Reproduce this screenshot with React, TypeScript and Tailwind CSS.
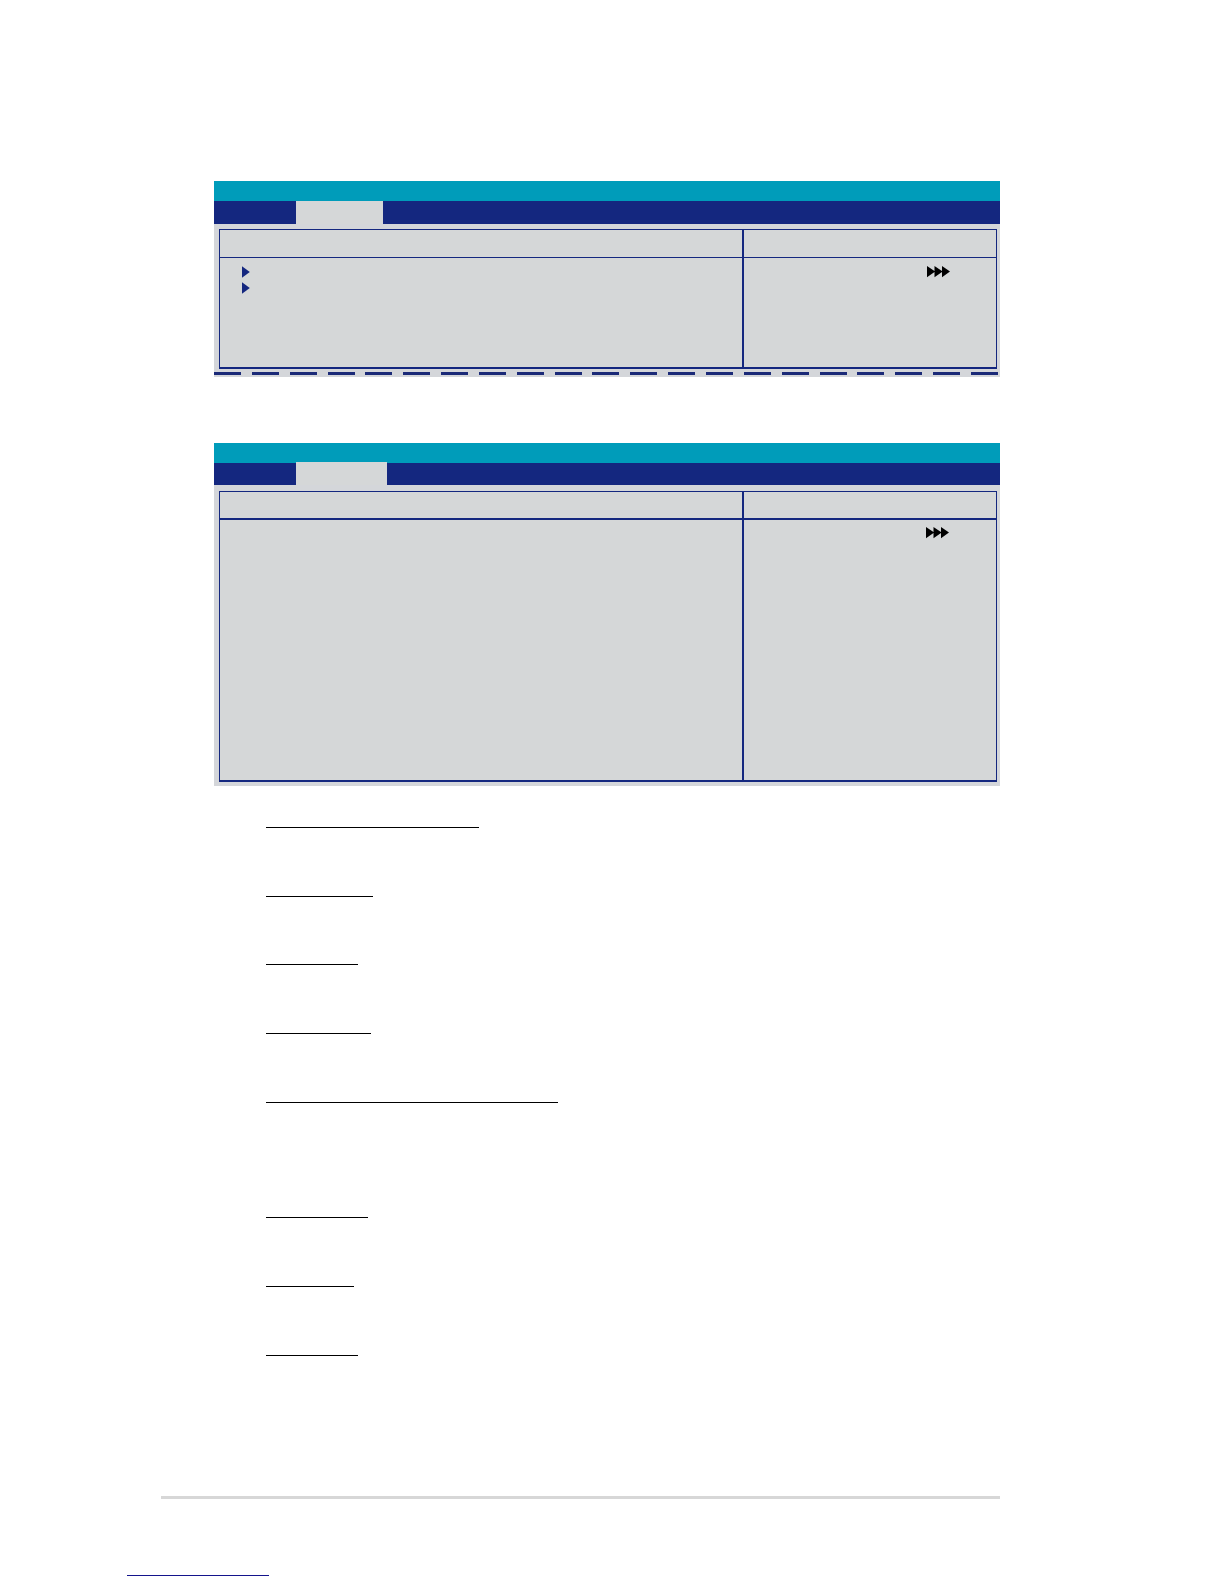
import clsx from "clsx";

const DASHES = Array.from({ length: 21 }, (_, i) => i);

const ITEMS = [
    { id: 1, width: "w-[213px]", height: "h-[69px]" },
    { id: 2, width: "w-[107px]", height: "h-[68px]" },
    { id: 3, width: "w-[92px]", height: "h-[69px]" },
    { id: 4, width: "w-[105px]", height: "h-[69px]" },
    { id: 5, width: "w-[292px]", height: "h-[115px]" },
    { id: 6, width: "w-[102px]", height: "h-[69px]" },
    { id: 7, width: "w-[88px]", height: "h-[69px]" },
    { id: 8, width: "w-[92px]", height: "h-px" },
];

function Arrow() {
    return (
        <svg width="8" height="12" viewBox="0 0 8 12" className="block fill-[#14277f]" aria-hidden="true">
            <path d="M0 0.3L7.8 6L0 11.7Z" />
        </svg>
    );
}

function TripleArrow() {
    return (
        <svg width="23" height="12" viewBox="0 0 23 12" className="block fill-black" aria-hidden="true">
            <path d="M0 0L8.2 5.6L0 11.3ZM7.5 0L15.7 5.6L7.5 11.3ZM15 0L23 5.6L15 11.3Z" />
        </svg>
    );
}

function SetupScreen({ compact = false }: { compact?: boolean }) {
    return (
        <section className="bg-[#d4d6da]">
            <div className="h-5 bg-[#009cba]" />
            <nav className={clsx("flex items-end bg-[#14277f] pl-[82px]", compact ? "h-[23px]" : "h-[22px]")}>
                <button
                    type="button"
                    aria-label="Current menu"
                    className={clsx("h-[23px] shrink-0 bg-[#d5d7d8]", compact ? "w-[87px]" : "w-[91px]")}
                />
            </nav>

            <div className={clsx("pr-[3px] pl-[5px]", compact ? "pt-[5px]" : "pt-[6px] pb-1")}>
                <div className="grid grid-cols-[1fr_254px] border border-b-2 border-[#14277f] bg-[#d5d7d8]">
                    {/* Header row */}
                    <div className={clsx("h-7 border-[#14277f]", compact ? "border-b" : "border-b-2")} />
                    <div className={clsx("h-7 border-l-2 border-[#14277f]", compact ? "border-b" : "border-b-2")} />

                    {/* Options and help */}
                    <div className={clsx("pl-[22px]", compact ? "h-[109px] pt-2" : "h-[260px]")}>
                        {compact && (
                            <div className="flex flex-col gap-1">
                                <Arrow />
                                <Arrow />
                            </div>
                        )}
                    </div>
                    <div
                        className={clsx(
                            "border-l-2 border-[#14277f]",
                            compact ? "pt-2 pl-[183px]" : "pt-[7px] pl-[182px]",
                        )}
                    >
                        <TripleArrow />
                    </div>
                </div>
            </div>

            {compact && (
                <div className="flex justify-between pt-[3px] pr-[2px] pb-[2px]">
                    {DASHES.map((dash) => (
                        <span key={dash} className="h-[3px] w-[27px] bg-[#1b2a78]" />
                    ))}
                </div>
            )}
        </section>
    );
}

export default function App() {
    return (
        <div className="bg-white pt-[181px] pb-2">
            <main className="mr-[224px] ml-[214px]">
                <SetupScreen compact />
                <div className="h-[66px]" />
                <SetupScreen />

                <div className="pt-[41px] pl-[52px]">
                    {ITEMS.map((item) => (
                        <div key={item.id} className={item.height}>
                            <div className={clsx("h-px bg-black", item.width)} />
                        </div>
                    ))}
                </div>
            </main>

            <footer className="mt-[140px]">
                <div className="mr-[224px] ml-[161px] h-[3px] bg-[#d7d7d7]" />
                <a
                    href="#"
                    aria-label="Back to top"
                    className="mt-[76px] ml-[127px] block h-px w-[142px] bg-[#14148c]"
                />
            </footer>
        </div>
    );
}
